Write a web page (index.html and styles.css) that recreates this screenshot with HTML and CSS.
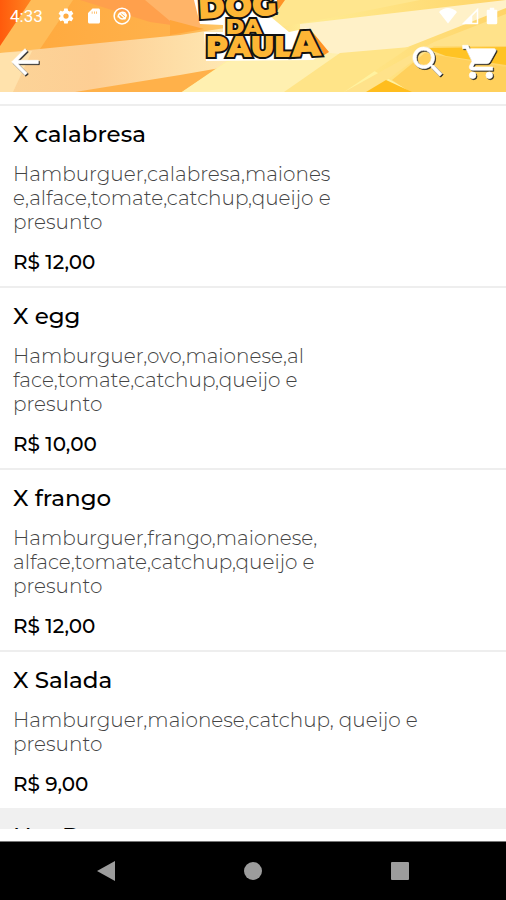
FILE: index.html
```html
<!DOCTYPE html>
<html lang="pt-BR">
<head>
<meta charset="utf-8">
<meta name="viewport" content="width=device-width, initial-scale=1">
<title>Dog da Paula</title>
<link rel="stylesheet" href="styles.css">
</head>
<body>
<div class="app">
  <header class="header">
    <svg class="backdrop" viewBox="0 0 506 92" preserveAspectRatio="none" aria-hidden="true">
      <defs>
        <linearGradient id="base" x1="0" x2="1" y1="0" y2="0">
          <stop offset="0" stop-color="#ffa83c"/>
          <stop offset=".35" stop-color="#ffb24c"/>
          <stop offset=".6" stop-color="#ffec94"/>
          <stop offset="1" stop-color="#ffd468"/>
        </linearGradient>
        <linearGradient id="flame" x1="0" x2="1" y1="0" y2="0">
          <stop offset="0" stop-color="#ff5a0c"/>
          <stop offset="1" stop-color="#ff8420"/>
        </linearGradient>
        <linearGradient id="band" x1="0" x2="1" y1="0" y2="0">
          <stop offset="0" stop-color="#fcd498"/>
          <stop offset=".35" stop-color="#fdce94"/>
          <stop offset="1" stop-color="#fff0bc"/>
        </linearGradient>
      </defs>
      <path fill="url(#base)" d="M0 0h506v92H0z"/>
      <path fill="#ffbc58" d="M28 0h45L38 52 0 53V44z"/>
      <path fill="url(#flame)" d="M0 0h31L0 46z"/>
      <path fill="#ffa04c" d="M80 0h120v29L150 22z"/>
      <path fill="#ffb468" d="M145 0h55v29l-30-8z"/>
      <path fill="#ffa63a" d="M170 20l34 9-34 6z"/>
      <path fill="url(#band)" d="M0 53L180 35l90-14v45L90 92H0z"/>
      <path fill="#ffe2ac" d="M0 53l32-2L13 92H0z"/>
      <path fill="#ffb14a" d="M75 92l105-17 40-7-40 24z"/>
      <path fill="#fff2a0" d="M182 92l45-31 115-8 70 39z"/>
      <path fill="#fff0b0" d="M182 92l45-30 113-20 60 6-80 44z"/>
      <path fill="#fff1c8" d="M300 24l206-24v8L380 58l-80-8z"/>
      <path fill="#ffe68e" d="M265 0h155l-80 16-75 14z"/>
      <path fill="#ffe488" d="M340 53l70-6-66 45h-60z"/>
      <path fill="#ffe28a" d="M344 92l90-50 72-28v32l-72 0-64 46z"/>
      <path fill="#ffc324" d="M425 48l81-1v18l-60-9z"/>
      <path fill="#ffd05c" d="M392 80l33-27 81 14v25H410z"/>
      <path fill="#ffbd1e" d="M366 92l20-12 26 12z"/>
    </svg>

    <div class="status">
      <span class="time">4:33</span>
      <svg class="status-icon" viewBox="0 0 24 24" aria-hidden="true"><path d="M19.400 13c.1-.3.1-.7.1-1s0-.7-.1-1l2.100-1.600c.2-.2.2-.4.1-.6l-2-3.500c-.1-.2-.4-.3-.6-.2l-2.500 1c-.5-.4-1.100-.7-1.700-1l-.4-2.600c0-.3-.2-.5-.4-.5h-4c-.3 0-.5.2-.5.4l-.4 2.700c-.6.200-1.200.6-1.700 1l-2.500-1c-.2-.1-.5 0-.6.2l-2 3.500c-.1.2-.1.5.1.6L4.500 11c0 .3-.1.700-.1 1s0 .7.1 1l-2.100 1.600c-.2.2-.2.400-.1.6l2 3.500c.1.200.4.300.6.2l2.500-1c.5.4 1.100.7 1.700 1l.4 2.600c0 .3.200.5.5.5h4c.2 0 .4-.2.4-.4l.4-2.700c.6-.2 1.200-.6 1.700-1l2.500 1c.2.100.5 0 .6-.2l2-3.500c.1-.2.1-.5-.1-.6zM12 15.500a3.500 3.500 0 1 1 0-7 3.500 3.500 0 0 1 0 7z" fill-rule="evenodd"/></svg>
      <svg class="status-icon" viewBox="0 0 24 24" aria-hidden="true"><path fill-rule="evenodd" d="M18 2h-8L4 8v12c0 1.100.9 2 2 2h12c1.100 0 2-.9 2-2V4c0-1.100-.9-2-2-2zM9 6h1v3H9zm3 0h1v3h-1zm3 0h1v3h-1z"/></svg>
      <svg class="status-icon ring" viewBox="0 0 24 24" aria-hidden="true"><circle cx="12" cy="12" r="10.500"/><path d="M7 14a6 6 0 0 1 9-6c3 3 1 8-3 8-3 0-5-2-6-5M8 8l9 8M11 7l6 5"/></svg>
      <span class="spacer"></span>
      <svg class="status-icon" viewBox="0 0 24 24" aria-hidden="true"><path d="M12 22L0 6.500C7-.5 17-.5 24 6.500z"/></svg>
      <svg class="status-icon" viewBox="0 0 24 24" aria-hidden="true"><path fill-rule="evenodd" d="M1 23L23 1v22zM15 12v9h6V6z"/></svg>
      <svg class="status-icon" viewBox="0 0 24 24" aria-hidden="true"><path d="M17.500 3.500H15V1H9v2.500H6.500C5.500 3.500 5 4 5 5v16c0 1 .5 2 1.500 2h11c1 0 1.500-1 1.500-2V5c0-1-.5-1.500-1.500-1.500z"/></svg>
    </div>

    <svg class="logo" viewBox="0 0 140 68" role="img" aria-label="Dog da Paula">
      <path fill="#ff9426" d="M86 0h8L82 17zM119 29l19 23-8 5z"/>
      <path fill="#fff" d="M3 0L9 24 32 25V32L13 32 15 61 122 60 132 53 118 28 98 32 80 17 86 0z"/>
      <g class="logo-text">
        <text x="8" y="19" font-size="32" transform="rotate(-3 8 19)">DOG</text>
        <text x="35" y="34" font-size="22">DA</text>
        <text x="15" y="57" font-size="30">PAUL</text>
        <text x="101" y="57" font-size="36" transform="rotate(-3 101 57)">A</text>
      </g>
    </svg>

    <div class="toolbar">
      <button class="icon-button" type="button" aria-label="Voltar"><svg viewBox="0 0 24 24"><path d="M20 11H7.800l5.600-5.600L12 4l-8 8 8 8 1.400-1.400L7.800 13H20z"/></svg></button>
      <span class="spacer"></span>
      <button class="icon-button" type="button" aria-label="Buscar"><svg viewBox="0 0 24 24"><path fill-rule="evenodd" d="M15.500 14h-.8l-.3-.3A6.500 6.500 0 1 0 13.700 14.400l.3.300v.8l5 5 1.500-1.500zM9.500 14a4.500 4.500 0 1 1 0-9 4.500 4.500 0 0 1 0 9z"/></svg></button>
      <button class="icon-button" type="button" aria-label="Carrinho"><svg viewBox="0 0 24 24"><path d="M7 18a2 2 0 1 0 0 4 2 2 0 0 0 0-4zM1 2v2h2l3.600 7.600-1.350 2.450C4.500 15.400 5.500 17 7 17h12v-2H7.400l-.2-.3.900-1.700h7.450c.75 0 1.400-.4 1.750-1l3.600-6.500c.3-.7-.1-1.500-.9-1.500H5.200l-.95-2zM17 18a2 2 0 1 0 0 4 2 2 0 0 0 0-4z"/></svg></button>
    </div>
  </header>

  <main class="menu">
    <article class="item">
      <h2 class="name">X calabresa</h2>
      <p class="description">Hamburguer,calabresa,maiones<br>e,alface,tomate,catchup,queijo e<br>presunto</p>
      <p class="price">R$ 12,00</p>
    </article>
    <article class="item">
      <h2 class="name">X egg</h2>
      <p class="description">Hamburguer,ovo,maionese,al<br>face,tomate,catchup,queijo e<br>presunto</p>
      <p class="price">R$ 10,00</p>
    </article>
    <article class="item">
      <h2 class="name">X frango</h2>
      <p class="description">Hamburguer,frango,maionese,<br>alface,tomate,catchup,queijo e<br>presunto</p>
      <p class="price">R$ 12,00</p>
    </article>
    <article class="item">
      <h2 class="name">X Salada</h2>
      <p class="description">Hamburguer,maionese,catchup, queijo e<br>presunto</p>
      <p class="price">R$ 9,00</p>
    </article>
    <h2 class="category">Hot Dog</h2>
  </main>

  <nav class="system-nav" aria-label="Sistema">
    <button class="nav-button" type="button" aria-label="Voltar"><svg viewBox="0 0 20 20"><path d="M1 10L19 0v20z"/></svg></button>
    <button class="nav-button" type="button" aria-label="Início"><svg viewBox="0 0 20 20"><circle cx="10" cy="10" r="9"/></svg></button>
    <button class="nav-button" type="button" aria-label="Recentes"><svg viewBox="0 0 20 20"><rect x="1" y="1" width="18" height="18" rx="1"/></svg></button>
  </nav>
</div>
</body>
</html>
```
FILE: styles.css
```css
* { box-sizing: border-box; margin: 0; }

body {
  font-family: Montserrat, Inter, sans-serif;
  color: #000;
  background: #fff;
}

.app {
  display: flex;
  flex-direction: column;
  height: 100vh;
}

.header { position: relative; flex: none; }

.backdrop {
  position: absolute;
  inset: 0;
  width: 100%;
  height: 100%;
}

.status {
  position: relative;
  display: flex;
  align-items: center;
  gap: 10px;
  height: 32px;
  padding: 0 5px 0 10px;
  color: #fff;
}

.time {
  margin-right: 4px;
  font: 17px/20px Roboto, sans-serif;
}

.status-icon { width: 18px; height: 18px; fill: #fff; }
.status-icon.ring { fill: none; stroke: #fff; stroke-width: 2; }
.status .spacer ~ .status-icon { margin-left: -6px; }

.spacer { flex: 1; }

.logo {
  position: absolute;
  top: 0;
  left: 50%;
  width: 140px;
  height: 68px;
  margin-left: -62px;
  overflow: hidden;
}

.logo-text {
  font-family: Montserrat, Inter, sans-serif;
  font-weight: 900;
  fill: #fdb535;
  stroke: #111;
  stroke-width: 4px;
  stroke-linejoin: miter;
  paint-order: stroke;
}

.toolbar {
  position: relative;
  display: flex;
  align-items: center;
  gap: 13px;
  height: 60px;
  padding: 0 5px;
}

.icon-button {
  width: 40px;
  height: 40px;
  padding: 0;
  border: 0;
  background: none;
}

.icon-button svg {
  display: block;
  width: 40px;
  height: 40px;
  fill: #fff;
  stroke: #fff;
  stroke-width: .4;
  filter: drop-shadow(1px 1px 0 #222);
}

.menu {
  flex: 1;
  min-height: 0;
  margin: 12px 0;
  overflow: hidden;
  border-top: 2px solid #eee;
}

.item {
  padding: 14px 13px 12px;
  border-bottom: 2px solid #eee;
}

.item:nth-last-child(2) { border-bottom-color: #f0f0f0; }

.name {
  font-size: 23px;
  line-height: 28px;
  font-weight: 500;
}

.description {
  margin: 14px 0 16px;
  font-size: 20px;
  line-height: 24px;
  font-weight: 300;
  color: #444;
}

.price {
  font-size: 20px;
  line-height: 24px;
  font-weight: 500;
}

.category {
  padding: 12px 13px;
  font-size: 23px;
  line-height: 28px;
  font-weight: 500;
  background: #f0f0f0;
}

.system-nav {
  flex: none;
  display: flex;
  justify-content: space-between;
  height: 59px;
  padding: 0 96px;
  border-top: 1px solid #777;
  background: #000;
}

.nav-button {
  width: 20px;
  padding: 0;
  border: 0;
  background: none;
}

.nav-button svg {
  display: block;
  width: 20px;
  height: 20px;
  fill: #9c9c9c;
}
```
